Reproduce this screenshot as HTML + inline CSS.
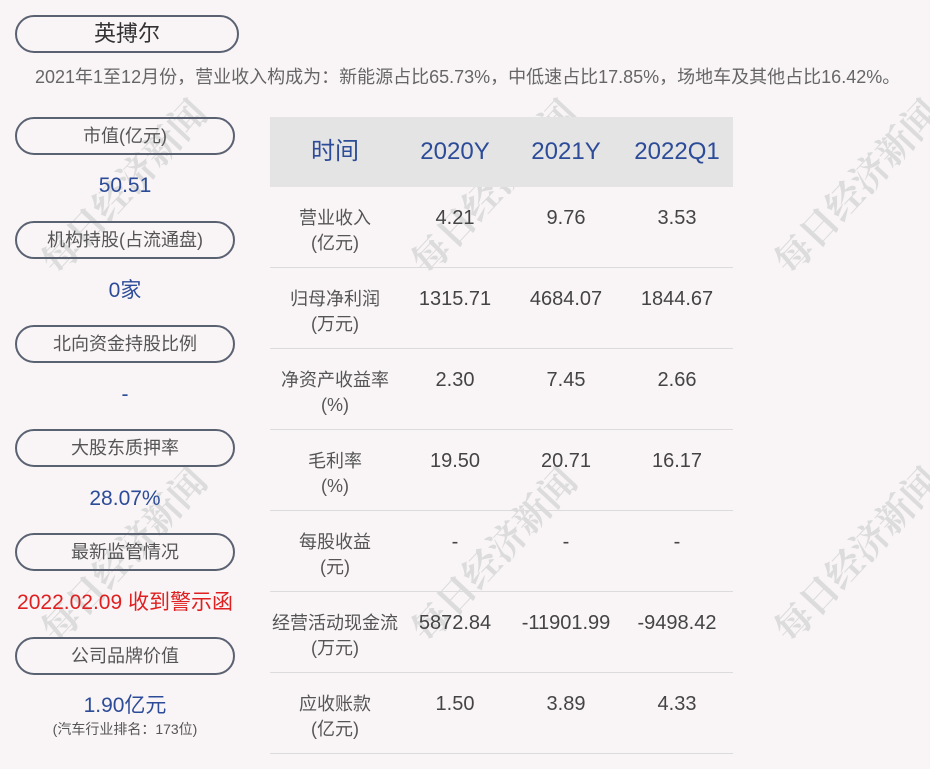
<!DOCTYPE html>
<html><head><meta charset="utf-8"><style>
*{margin:0;padding:0;box-sizing:border-box}
body{width:930px;height:769px;background:#f9f5f6;font-family:"Liberation Sans","Noto Sans CJK SC",sans-serif;position:relative;overflow:hidden}
.a{position:absolute}
.pill{position:absolute;left:15px;width:220px;height:38px;border:2px solid #5a6272;border-radius:19px;text-align:center;line-height:34px;font-size:18px;color:#555}
.val{position:absolute;left:15px;width:220px;text-align:center;font-size:21px;line-height:24px;color:#2c4b98}
.wm{position:absolute;font-family:"Noto Serif CJK SC",serif;font-weight:bold;font-size:37px;color:#dcdcdc;transform:translate(-50%,-50%) rotate(-47deg);white-space:nowrap}
.hd{position:absolute;top:117px;left:270px;width:463px;height:70px;background:#e4e4e4}
.c{position:absolute;text-align:center;width:110px}
.h{font-size:24px;line-height:30px;color:#2c4b98;top:137px}
.lab{font-size:18px;color:#555;line-height:25px;width:130px}
.num{font-size:20px;line-height:24px;color:#444}
.ln{position:absolute;left:270px;width:463px;height:1px;background:#dcdcdc}
</style></head><body>
<div class="wm" style="left:122px;top:185px">每日经济新闻</div>
<div class="wm" style="left:492px;top:185px">每日经济新闻</div>
<div class="wm" style="left:855px;top:185px">每日经济新闻</div>
<div class="wm" style="left:122px;top:553px">每日经济新闻</div>
<div class="wm" style="left:492px;top:553px">每日经济新闻</div>
<div class="wm" style="left:855px;top:553px">每日经济新闻</div>

<div class="pill" style="top:15px;width:224px;font-size:22px;color:#333">英搏尔</div>
<div class="a" style="left:35px;top:63px;font-size:18px;color:#666;white-space:nowrap">2021年1至12月份，营业收入构成为：新能源占比65.73%，中低速占比17.85%，场地车及其他占比16.42%。</div>

<div class="pill" style="top:117px">市值(亿元)</div>
<div class="val" style="top:174px">50.51</div>
<div class="pill" style="top:221px">机构持股(占流通盘)</div>
<div class="val" style="top:279px">0家</div>
<div class="pill" style="top:325px">北向资金持股比例</div>
<div class="val" style="top:383px">-</div>
<div class="pill" style="top:429px">大股东质押率</div>
<div class="val" style="top:487px">28.07%</div>
<div class="pill" style="top:533px">最新监管情况</div>
<div class="val" style="top:591px;color:#e02020;left:0;width:250px">2022.02.09 收到警示函</div>
<div class="pill" style="top:637px">公司品牌价值</div>
<div class="val" style="top:694px">1.90亿元</div>
<div class="a" style="left:15px;width:220px;top:720px;text-align:center;font-size:14px;line-height:18px;color:#555">(汽车行业排名：173位)</div>

<div class="hd"></div>
<div class="c h" style="left:280px">时间</div>
<div class="c h" style="left:400px">2020Y</div>
<div class="c h" style="left:511px">2021Y</div>
<div class="c h" style="left:622px">2022Q1</div>

<div class="ln" style="top:267px"></div><div class="ln" style="top:348px"></div><div class="ln" style="top:429px"></div><div class="ln" style="top:510px"></div><div class="ln" style="top:591px"></div><div class="ln" style="top:672px"></div><div class="ln" style="top:753px"></div>

<div class="c lab" style="left:270px;top:206px">营业收入<br>(亿元)</div>
<div class="c num" style="left:400px;top:206px">4.21</div><div class="c num" style="left:511px;top:206px">9.76</div><div class="c num" style="left:622px;top:206px">3.53</div>

<div class="c lab" style="left:270px;top:287px">归母净利润<br>(万元)</div>
<div class="c num" style="left:400px;top:287px">1315.71</div><div class="c num" style="left:511px;top:287px">4684.07</div><div class="c num" style="left:622px;top:287px">1844.67</div>

<div class="c lab" style="left:270px;top:368px">净资产收益率<br>(%)</div>
<div class="c num" style="left:400px;top:368px">2.30</div><div class="c num" style="left:511px;top:368px">7.45</div><div class="c num" style="left:622px;top:368px">2.66</div>

<div class="c lab" style="left:270px;top:449px">毛利率<br>(%)</div>
<div class="c num" style="left:400px;top:449px">19.50</div><div class="c num" style="left:511px;top:449px">20.71</div><div class="c num" style="left:622px;top:449px">16.17</div>

<div class="c lab" style="left:270px;top:530px">每股收益<br>(元)</div>
<div class="c num" style="left:400px;top:530px">-</div><div class="c num" style="left:511px;top:530px">-</div><div class="c num" style="left:622px;top:530px">-</div>

<div class="c lab" style="left:265px;top:611px;width:140px">经营活动现金流<br>(万元)</div>
<div class="c num" style="left:400px;top:611px">5872.84</div><div class="c num" style="left:511px;top:611px">-11901.99</div><div class="c num" style="left:622px;top:611px">-9498.42</div>

<div class="c lab" style="left:270px;top:692px">应收账款<br>(亿元)</div>
<div class="c num" style="left:400px;top:692px">1.50</div><div class="c num" style="left:511px;top:692px">3.89</div><div class="c num" style="left:622px;top:692px">4.33</div>
</body></html>
